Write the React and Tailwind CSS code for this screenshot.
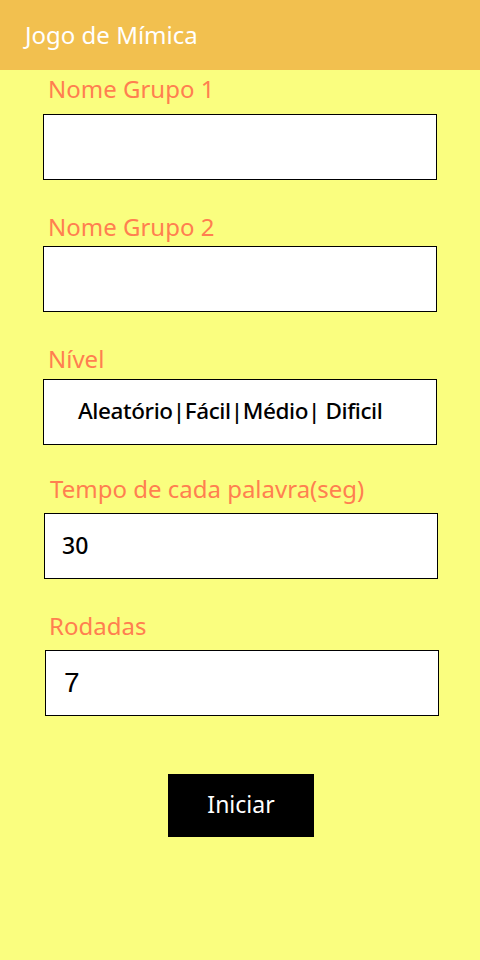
export default function App() {
  const font = { fontFamily: '"Noto Sans", "Open Sans", sans-serif' }

  return (
    <main style={font} className="min-h-[960px] w-[480px] bg-[#fafe7f]">
      <header className="flex h-[70px] items-center bg-[#f2c04f] pl-[25px]">
        <h1 className="text-[24px] leading-[32px] text-white">Jogo de Mímica</h1>
      </header>

      <div className="flex flex-col">
        <label className="ml-[48px] mt-[3px] text-[24px] leading-[32px] text-[#ff7f50]">Nome Grupo 1</label>
        <div className="ml-[43px] mt-[9px] h-[66px] w-[394px] border border-black bg-white" />

        <label className="ml-[48px] mt-[31px] text-[24px] leading-[32px] text-[#ff7f50]">Nome Grupo 2</label>
        <div className="ml-[43px] mt-[3px] h-[66px] w-[394px] border border-black bg-white" />

        <label className="ml-[48px] mt-[31px] text-[24px] leading-[32px] text-[#ff7f50]">Nível</label>
        <div className="ml-[43px] mt-[4px] flex h-[66px] w-[394px] items-center border border-black bg-white pb-[3px] pl-[34px] text-[22.5px] font-medium tracking-[-0.4px] text-black">
          Aleatório|Fácil|Médio| Dificil
        </div>

        <label className="ml-[50px] mt-[28px] text-[24px] leading-[32px] text-[#ff7f50]">Tempo de cada palavra(seg)</label>
        <div className="ml-[44px] mt-[8px] flex h-[66px] w-[394px] items-center border border-black bg-white pb-[2px] pl-[17px] text-[23px] font-medium text-black">
          30
        </div>

        <label className="ml-[49px] mt-[31px] text-[24px] leading-[32px] text-[#ff7f50]">Rodadas</label>
        <div
          style={{ fontFamily: '"Liberation Sans", Arial, sans-serif' }}
          className="ml-[45px] mt-[8px] flex h-[66px] w-[394px] items-center border border-black bg-white pl-[18px] text-[28px] text-black"
        >
          7
        </div>

        <div className="mt-[58px] flex justify-center pl-[2px]">
          <button type="button" className="h-[63px] w-[146px] bg-black pb-[3px] text-[23px] text-white">
            Iniciar
          </button>
        </div>
      </div>
    </main>
  )
}
